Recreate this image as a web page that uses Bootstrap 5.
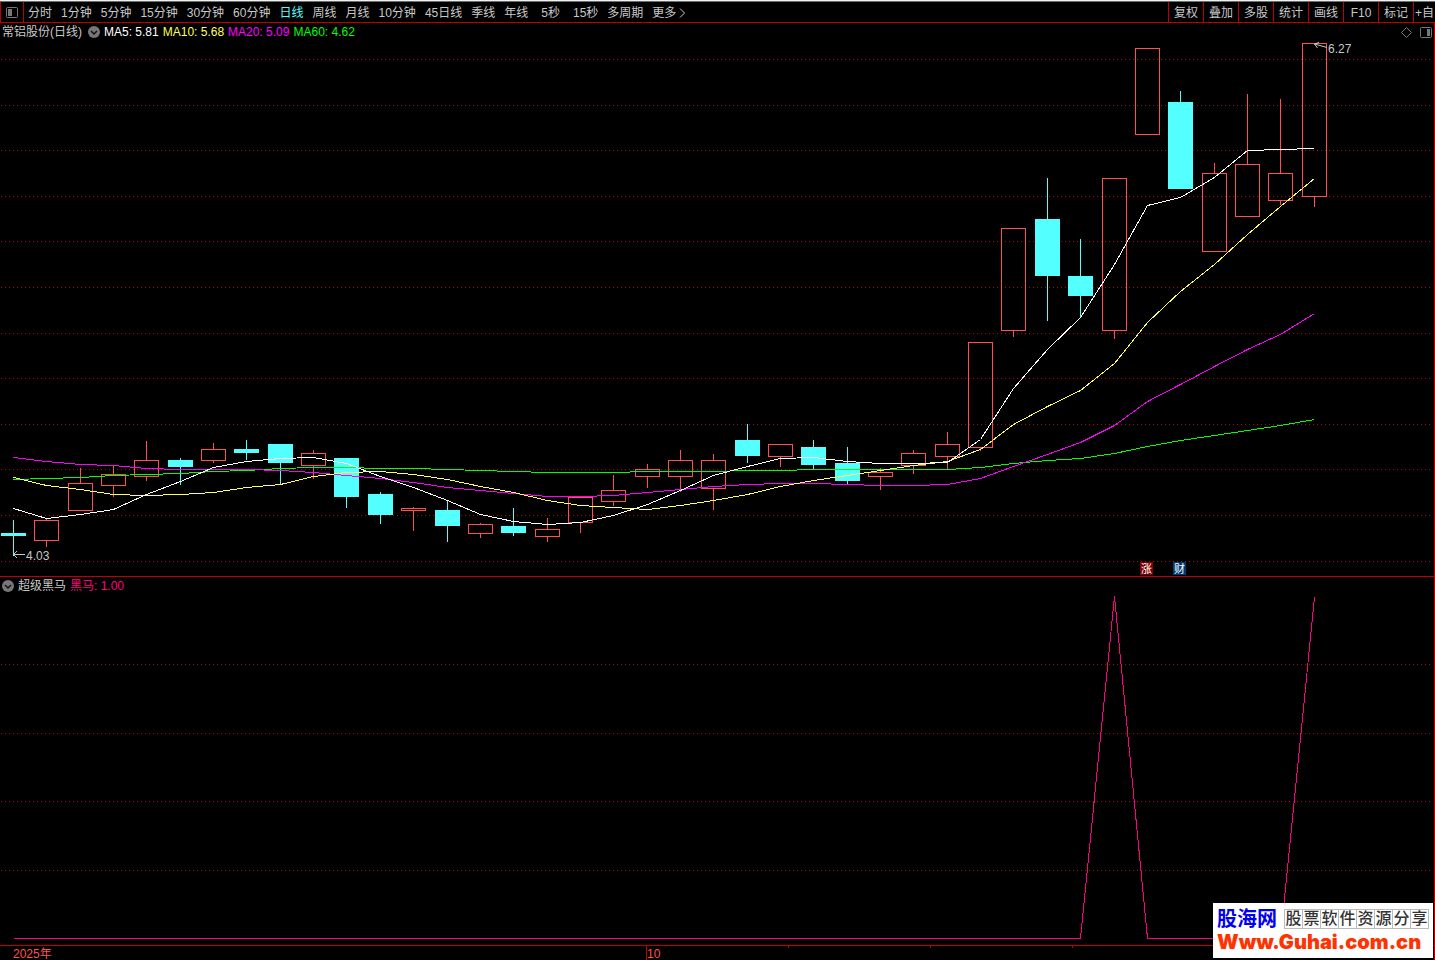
<!DOCTYPE html>
<html lang="zh-CN">
<head>
<meta charset="utf-8">
<meta name="viewport" content="width=device-width, initial-scale=1">
<title>常铝股份(日线)</title>
<link rel="stylesheet" href="https://cdn.jsdelivr.net/npm/bootstrap@5.3.0/dist/css/bootstrap.min.css">
<style>
  :root { --line: #c00000; --ink: #c8c8c8; --hot: #ff0080; }
  body { background: #000; color: var(--ink); font: 12px/18px "Liberation Sans", "Noto Sans CJK SC", sans-serif; }
  button { font: inherit; color: inherit; background: none; border: 0; padding: 0; white-space: nowrap; }
  .window-edge { height: 2px; background: linear-gradient(#f0f0f0 50%, #687070 50%); }
  .toolbar { height: 21px; border-bottom: 1px solid var(--line); border-left: 1px solid var(--line); }
  .toggle-cell { width: 23px; border-right: 1px solid var(--line); }
  .periods { gap: 9px; padding: 2px 0 0 4px; }
  .periods .seconds { padding: 0 4px; }
  .periods .current { color: #54ffff; }
  .tool { width: 35px; padding-top: 2px; border-left: 1px solid var(--line); text-align: center; }
  .tool-cut { width: 22px; }
  .workspace { border-right: 1px solid var(--line); }
  .legend { height: 18px; gap: 4px; padding: 0 2px; }
  .stock-name { margin-right: 2px; }
  .sub-legend { height: 17px; }
  .plot { display: block; width: 100%; height: auto; }
  .plot text { fill: var(--ink); }
  .grid-dots { stroke: #b00808; stroke-dasharray: 1 3; }
  .up-wick { stroke: #ff5050; }
  .down { fill: #54ffff; }
  .down-wick { stroke: #54ffff; }
  .ma { fill: none; }
  .c-ma5 { color: #fff; } .c-ma10 { color: #ffff54; } .c-ma20 { color: #f0f; } .c-ma60 { color: #0f0; } .c-hot { color: var(--hot); }
  .split { border-top: 1px solid var(--line); }
  .plot .axis-text { fill: #ff5050; }
  .plot .flag-text { fill: #fff; font-size: 11px; }
  .sitemark { right: 2px; bottom: 2px; width: 220px; height: 55px; padding: 5px 4px 0; background: #fff; }
  .site-name { color: #0000f4; font: 700 20px/22px "Liberation Sans", "Noto Sans CJK SC", sans-serif; }
  .tagline { margin-left: 7px; border: 1px solid #bbb; border-left-width: 0; }
  .tagline span { width: 18px; border-left: 1px solid #bbb; color: #333; text-align: center; font: 500 16px/18px "Liberation Sans", "Noto Sans CJK SC", sans-serif; }
  .site-url { color: #ff3300; font: 900 20px/24px Inter, "DejaVu Sans", sans-serif; white-space: nowrap; }
</style>
</head>
<body>
<div class="position-relative">
  <div class="window-edge"></div>
  <nav class="toolbar d-flex align-items-stretch overflow-hidden" aria-label="周期">
    <button class="toggle-cell d-flex align-items-center justify-content-center flex-shrink-0" aria-label="侧栏">
      <svg width="12" height="11" fill="none" stroke="#777"><rect x=".5" y=".5" width="11" height="10" rx="1"/><rect x="2" y="2" width="4" height="7" fill="#777" stroke="none"/></svg>
    </button>
    <div class="periods d-flex align-items-center flex-grow-1 overflow-hidden">
      <button>分时</button><button>1分钟</button><button>5分钟</button><button>15分钟</button><button>30分钟</button><button>60分钟</button><button class="current" aria-current="true">日线</button><button>周线</button><button>月线</button><button>10分钟</button><button>45日线</button><button>季线</button><button>年线</button><button class="seconds">5秒</button><button>15秒</button><button>多周期</button><button class="d-flex align-items-center">更多<svg width="12" height="12" fill="none" stroke="#c8c8c8"><path d="M4 1.500l4.500 4.500-4.500 4.500"/></svg></button>
    </div>
    <button class="tool flex-shrink-0">复权</button><button class="tool flex-shrink-0">叠加</button><button class="tool flex-shrink-0">多股</button><button class="tool flex-shrink-0">统计</button><button class="tool flex-shrink-0">画线</button><button class="tool flex-shrink-0">F10</button><button class="tool flex-shrink-0">标记</button><button class="tool tool-cut flex-shrink-0">+自</button>
  </nav>

  <main class="workspace">
    <section aria-label="K线">
      <div class="legend d-flex align-items-center">
        <span class="stock-name">常铝股份(日线)</span>
        <button class="d-flex" aria-label="主图菜单"><svg width="12" height="12"><circle cx="6" cy="6" r="6" fill="#777"/><path d="M3 5l3 3 3-3" fill="none" stroke="#111" stroke-width="1.500"/></svg></button>
        <span class="c-ma5">MA5: 5.81</span><span class="c-ma10">MA10: 5.68</span><span class="c-ma20">MA20: 5.09</span><span class="c-ma60">MA60: 4.62</span>
        <div class="ms-auto d-flex align-items-center gap-2">
          <svg width="11" height="11" fill="none" stroke="#777"><path d="M5.500 .5l5 5-5 5-5-5z"/></svg>
          <svg width="12" height="11" fill="none" stroke="#777"><rect x=".5" y=".5" width="11" height="10" rx="1"/><rect x="7" y="2" width="3" height="7" fill="#777" stroke="none"/></svg>
        </div>
      </div>
      <svg class="plot" id="price" viewBox="0 41 1434 535" role="img" aria-label="日K线图"></svg>
    </section>
    <section class="split" aria-label="超级黑马">
      <div class="legend sub-legend d-flex align-items-center">
        <button class="d-flex" aria-label="副图菜单"><svg width="12" height="12"><circle cx="6" cy="6" r="6" fill="#777"/><path d="M3 5l3 3 3-3" fill="none" stroke="#111" stroke-width="1.500"/></svg></button>
        <span>超级黑马</span><span class="c-hot">黑马: 1.00</span>
      </div>
      <svg class="plot" id="signal" viewBox="0 594 1434 366" role="img" aria-label="黑马指标"></svg>
    </section>
  </main>

  <a class="sitemark position-absolute d-block text-decoration-none" href="#">
    <span class="d-flex align-items-center"><span class="site-name">股海网</span><span class="tagline d-flex"><span>股</span><span>票</span><span>软</span><span>件</span><span>资</span><span>源</span><span>分</span><span>享</span></span></span>
    <span class="site-url d-block">Www.Guhai.com.cn</span>
  </a>
</div>
<script src="https://cdn.jsdelivr.net/npm/bootstrap@5.3.0/dist/js/bootstrap.bundle.min.js"></script>
<script>
  // Each candle: direction (1 up, 0 down), body top, body bottom, high, low
  const candles = [
    [0,533,535,520,555],[1,520,540,518,546],[1,483,510,468,510],[1,474,485,466,496],[1,460,476,441,480],
    [0,460,466,458,484],[1,449,460,443,462],[0,449,452,440,459],[0,444,462,444,484],[1,453,465,450,478],
    [0,458,496,458,507],[0,494,514,492,523],[1,508,510,507,530],[0,510,525,501,541],[1,524,533,523,537],
    [0,526,532,508,535],[1,529,536,518,541],[1,497,522,497,532],[1,490,501,475,505],[1,469,476,464,487],
    [1,460,476,450,491],[1,460,488,454,509],[0,440,455,424,462],[1,444,456,444,466],[0,447,464,440,469],
    [0,463,480,447,483],[1,472,476,468,489],[1,453,465,450,473],[1,444,456,432,468],[1,342,447,342,450],
    [1,228,330,228,336],[0,219,275,178,320],[0,276,295,239,317],[1,178,330,178,338],[1,48,134,48,134],
    [0,102,188,91,188],[1,173,251,163,251],[1,164,216,94,216],[1,173,200,99,204],[1,43,196,43,206]
  ];
  const averages = {
    '#ffffff': [508,518,514,509,494,481,467,461,458,457,463,476,487,500,514,521,524,522,515,504,490,475,466,458,457,461,463,463,462,439,388,349,317,264,205,197,177,150,149,148],
    '#ffff54': [477,485,489,494,495,494,492,487,484,476,472,471,474,479,486,492,500,505,507,509,505,500,494,486,480,475,470,465,461,449,424,406,390,363,322,291,264,234,206,178],
    '#ff00ff': [457,461,464,465,468,469,469,469,470,472,475,478,482,487,490,493,496,496,495,492,489,486,484,483,483,484,485,485,484,478,466,454,442,425,401,384,366,349,334,313],
    '#00ff00': [479,478,477,475,474,473,471,470,468,467,467,468,468,469,470,471,472,472,472,471,471,471,470,470,469,469,469,469,469,467,463,460,458,453,446,440,435,430,425,419]
  };
  const signal = candles.map((_, i) => i === 33 ? 596 : i === 39 ? 597 : 938);

  const centre = i => Math.round(12.96 + 33.35 * i);
  const line = (x1, y1, x2, y2, cls) => `<line class="${cls}" x1="${x1}" y1="${y1}" x2="${x2}" y2="${y2}"/>`;
  const grid = ys => ys.map(y => line(1, y + .5, 1431, y + .5, 'grid-dots')).join('');
  const curve = (ys, colour) =>
    `<polyline class="ma" stroke="${colour}" points="${ys.map((y, i) => `${centre(i) + .5},${y + .5}`).join(' ')}"/>`;
  const candle = ([up, top, bottom, high, low], i) => {
    const x = centre(i), wick = up ? 'up-wick' : 'down-wick';
    const body = up
      ? `<rect fill="none" stroke="#ff5050" x="${x - 11.5}" y="${top + .5}" width="24" height="${bottom - top}"/>`
      : `<rect class="down" x="${x - 12}" y="${top}" width="25" height="${bottom - top + 1}"/>`;
    return (high < top ? line(x + .5, high, x + .5, top, wick) : '') +
           (low > bottom ? line(x + .5, bottom + 1, x + .5, low + 1, wick) : '') + body;
  };

  document.getElementById('price').innerHTML =
    `<g shape-rendering="crispEdges">${grid([59,105,150,196,241,287,333,378,424,469,515,561])}
     ${candles.map(candle).join('')}
     ${Object.entries(averages).reverse().map(([c, ys]) => curve(ys, c)).join('')}
     <rect x="1140" y="562" width="13" height="13" fill="#800000"/><rect x="1173" y="562" width="13" height="13" fill="#003870"/></g>
     <g fill="none" stroke="#c8c8c8"><path d="M13 554.500h12M17 551l-3.500 3.500 3.500 3.500M1327 47.500l-12.500-3.500M1319 42.500l-4.500 1.500 3 4"/></g>
     <text x="26" y="560">4.03</text><text x="1328" y="53">6.27</text>
     <text class="flag-text" x="1141" y="573">涨</text><text class="flag-text" x="1174" y="573">财</text>`;

  document.getElementById('signal').innerHTML =
    `<g shape-rendering="crispEdges">${grid([664,733,801,870])}${curve(signal, '#ff0080')}
     <path stroke="#c00000" d="M0 945.500H1434M646.500 946v14M788.500 946v2M930.500 946v2M1072.500 946v2"/></g>
     <text class="axis-text" x="13" y="958">2025年</text><text class="axis-text" x="647" y="958">10</text>`;
</script>
</body>
</html>
